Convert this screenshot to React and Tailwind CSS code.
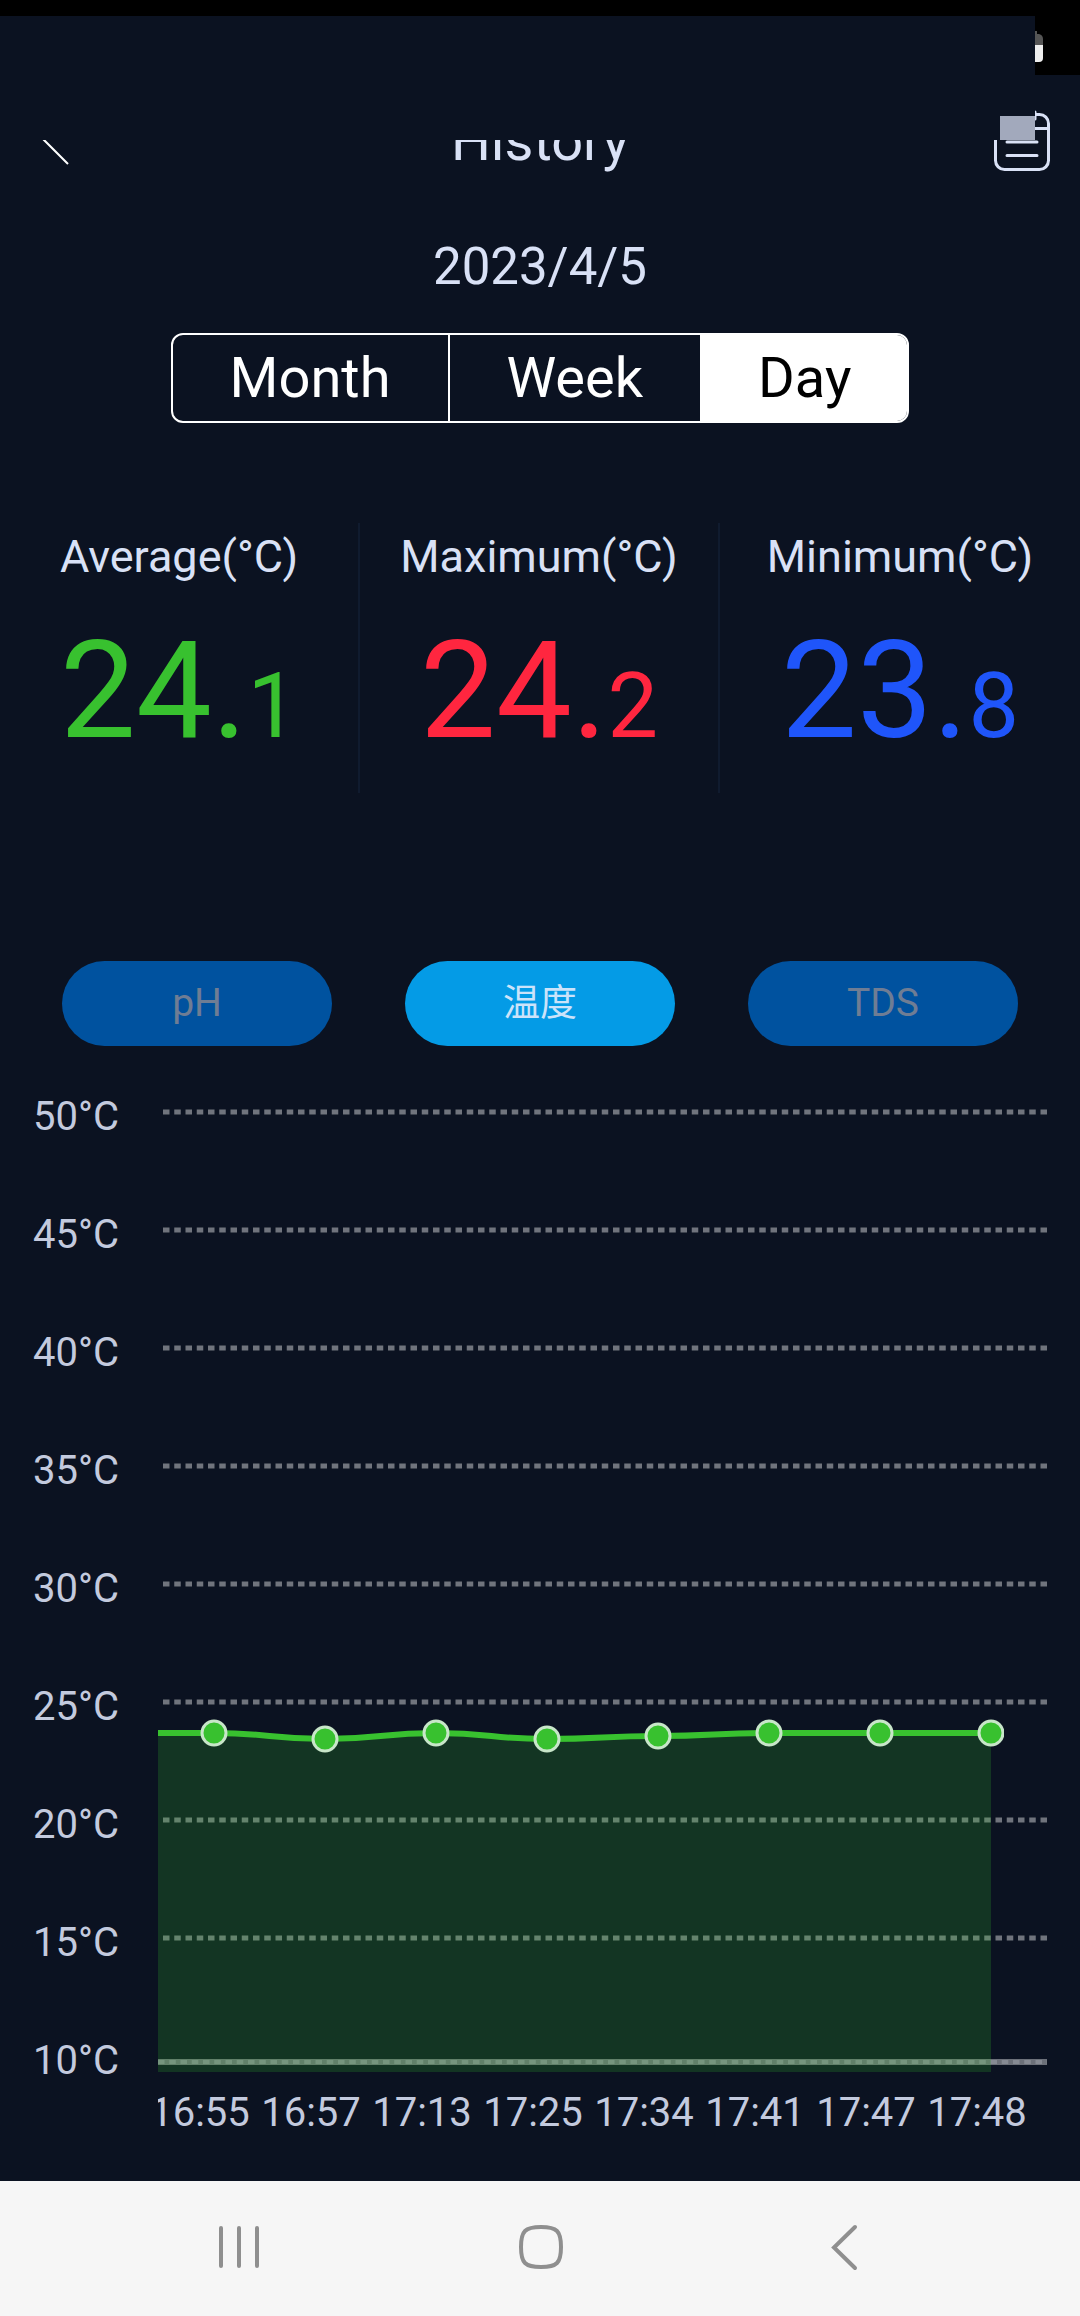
import React from "react";

const PERIODS = [
  { label: "Month", active: false },
  { label: "Week", active: false },
  { label: "Day", active: true },
];

const STATS = [
  { label: "Average(°C)", whole: "24.", decimal: "1", color: "text-[#38c12f]" },
  { label: "Maximum(°C)", whole: "24.", decimal: "2", color: "text-[#ff263f]" },
  { label: "Minimum(°C)", whole: "23.", decimal: "8", color: "text-[#1f55fa]" },
];

const SENSORS = [
  { label: "pH", active: false },
  { label: "温度", active: true },
  { label: "TDS", active: false },
];

const Y_TICKS = [50, 45, 40, 35, 30, 25, 20, 15, 10];

const READINGS = [
  { time: "16:55", y: 649 },
  { time: "16:57", y: 655 },
  { time: "17:13", y: 649 },
  { time: "17:25", y: 655 },
  { time: "17:34", y: 652 },
  { time: "17:41", y: 649 },
  { time: "17:47", y: 649 },
  { time: "17:48", y: 649 },
];

const LEFT = 158;
const RIGHT = 1047;
const BOTTOM = 988;
const pointX = (i) => 214 + i * 111;

function curve() {
  let d = `M${LEFT} ${READINGS[0].y} L${pointX(0)} ${READINGS[0].y}`;
  for (let i = 1; i < READINGS.length; i++) {
    const mid = (pointX(i - 1) + pointX(i)) / 2;
    d += ` C${mid} ${READINGS[i - 1].y} ${mid} ${READINGS[i].y} ${pointX(i)} ${READINGS[i].y}`;
  }
  return d;
}

function StatusBar() {
  return (
    <div className="flex h-[75px] bg-black pt-4">
      <div className="flex-1 bg-[#0b1221]" />
      <div className="w-[45px]">
        <svg className="block h-[59px] w-[45px]" viewBox="0 0 45 59" aria-hidden="true">
          <path d="M0 15h2v3h2q4 1 4 5v6H0z" fill="#555" />
          <path d="M0 29h8v13q0 4-4 4H0z" fill="#eee" />
        </svg>
      </div>
    </div>
  );
}

function Header() {
  return (
    <header className="relative flex h-[130px] items-center justify-between px-[30px]">
      <button type="button" aria-label="Back" className="flex w-14 justify-center">
        <svg className="block h-14 w-8" viewBox="0 0 32 56" fill="none" aria-hidden="true">
          <path d="M26 -2 L-1 25 L26 52" stroke="#fff" strokeWidth="2" />
        </svg>
      </button>
      <h1 className="pt-0.5 text-[56px] leading-[64px] text-[#d9e1f6]">History</h1>
      <button type="button" aria-label="Calendar" className="block w-14">
        <svg className="block h-16 w-14" viewBox="0 0 56 64" fill="none" stroke="#d9e1f6" strokeWidth="3" aria-hidden="true">
          <rect x="1.5" y="6.5" width="53" height="55" rx="9" />
          <path d="M2 20.500h52" />
          <path d="M13 34h30M13 47.500h30M15 4v7M41 4v7" strokeLinecap="round" />
        </svg>
      </button>
      <div className="absolute top-0 right-[45px] left-0 h-[65px] bg-[#0b1221]">
        <div className="absolute right-0 bottom-0 h-6 w-[35px] bg-[#a2a9bc]" />
      </div>
    </header>
  );
}

function Chart() {
  const d = curve();
  return (
    <svg
      className="block h-auto w-full"
      viewBox="0 0 1080 1097"
      role="img"
      aria-label="Temperature by time"
      fontFamily="Roboto, sans-serif"
      fontSize="40"
      fill="#c3cade"
    >
      <clipPath id="plot">
        <rect x={LEFT} y="0" width="846" height="1097" />
      </clipPath>
      <clipPath id="times">
        <rect x={LEFT} y="0" width="922" height="1097" />
      </clipPath>
      {Y_TICKS.map((t, i) => (
        <text key={t} x="33" y={46 + i * 118}>
          {t}°C
        </text>
      ))}
      {Y_TICKS.slice(0, -1).map((t, i) => (
        <line
          key={t}
          x1="163"
          x2={RIGHT}
          y1={28 + i * 118}
          y2={28 + i * 118}
          stroke="#70747d"
          strokeWidth="5"
          strokeDasharray="6.5 4.75"
        />
      ))}
      <line x1={LEFT} x2={RIGHT} y1="978" y2="978" stroke="#6c7079" strokeWidth="6" />
      <line x1={LEFT} x2={RIGHT} y1="978" y2="978" stroke="#868a93" strokeWidth="4" strokeDasharray="6.5 4.75" />
      <path
        d={`${d} L${pointX(READINGS.length - 1)} ${BOTTOM} L${LEFT} ${BOTTOM} Z`}
        fill="#38c12f"
        fillOpacity="0.2"
      />
      <g clipPath="url(#plot)">
        <path d={d} fill="none" stroke="#38c12f" strokeWidth="6" />
        {READINGS.map((r, i) => (
          <circle key={r.time} cx={pointX(i)} cy={r.y} r="12" fill="#38c12f" stroke="#c8e6c9" strokeWidth="3" />
        ))}
      </g>
      <g clipPath="url(#times)" textAnchor="middle">
        {READINGS.map((r, i) => (
          <text key={r.time} x={pointX(i) - 14} y="1042">
            {r.time}
          </text>
        ))}
      </g>
    </svg>
  );
}

function NavBar() {
  return (
    <nav className="grid h-[135px] grid-cols-[1fr_auto_1fr] items-center bg-[#f6f6f6] pb-1" aria-label="System">
      <button type="button" aria-label="Recent apps" className="mr-[253px] justify-self-end">
        <svg className="block h-12 w-12" viewBox="0 0 48 48" stroke="#8f8f8f" strokeWidth="4" strokeLinecap="round" aria-hidden="true">
          <path d="M6 5v38M24 5v38M42 5v38" />
        </svg>
      </button>
      <button type="button" aria-label="Home">
        <svg className="block h-12 w-12" viewBox="0 0 48 48" fill="none" stroke="#8f8f8f" strokeWidth="4" aria-hidden="true">
          <path d="M25 4C41 4 45 8 45 24S41 44 25 44 5 40 5 24 9 4 25 4z" />
        </svg>
      </button>
      <button type="button" aria-label="Go back" className="ml-[257px] justify-self-start">
        <svg className="block h-12 w-12" viewBox="0 0 48 48" fill="none" stroke="#8f8f8f" strokeWidth="4" strokeLinecap="round" aria-hidden="true">
          <path d="M34 4L13 24.500L34 45" />
        </svg>
      </button>
    </nav>
  );
}

export default function App() {
  return (
    <div className="flex min-h-screen flex-col bg-[#0b1221] font-['Roboto','Noto_Sans_CJK_SC',sans-serif]">
      <StatusBar />
      <Header />
      <main className="flex flex-1 flex-col">
        <p className="pt-8 text-center text-[51px] leading-[60px] text-[#d9e1f6]">2023/4/5</p>

        <div className="mt-9 flex h-[90px] self-center overflow-hidden rounded-xl border-2 border-white text-[56px] leading-[64px]">
          {PERIODS.map((p) => (
            <button
              key={p.label}
              type="button"
              aria-pressed={p.active}
              className={
                p.active
                  ? "bg-white px-14 text-black"
                  : "border-r-2 border-white px-[57px] text-white"
              }
            >
              {p.label}
            </button>
          ))}
        </div>

        <dl className="mt-[100px] grid h-[270px] grid-cols-3 divide-x-2 divide-[#101b2f]">
          {STATS.map((s) => (
            <div key={s.label} className="flex flex-col items-center pt-[7px]">
              <dt className="text-[45px] leading-[54px] text-[#d9e1f6]">{s.label}</dt>
              <dd className={`mt-7 text-[135px] leading-[158px] ${s.color}`}>
                {s.whole}
                <span className="text-[90px]">{s.decimal}</span>
              </dd>
            </div>
          ))}
        </dl>

        <div className="mt-[168px] flex justify-between px-[62px]">
          {SENSORS.map((s) => (
            <button
              key={s.label}
              type="button"
              aria-pressed={s.active}
              className={
                s.active
                  ? "h-[85px] w-[270px] rounded-full bg-[#049be6] text-[37px] text-[#cbe3fa]"
                  : "h-[85px] w-[270px] rounded-full bg-[#00529f] text-[39px] text-[#6f7d94]"
              }
            >
              {s.label}
            </button>
          ))}
        </div>

        <div className="mt-[38px]">
          <Chart />
        </div>
      </main>
      <NavBar />
    </div>
  );
}
